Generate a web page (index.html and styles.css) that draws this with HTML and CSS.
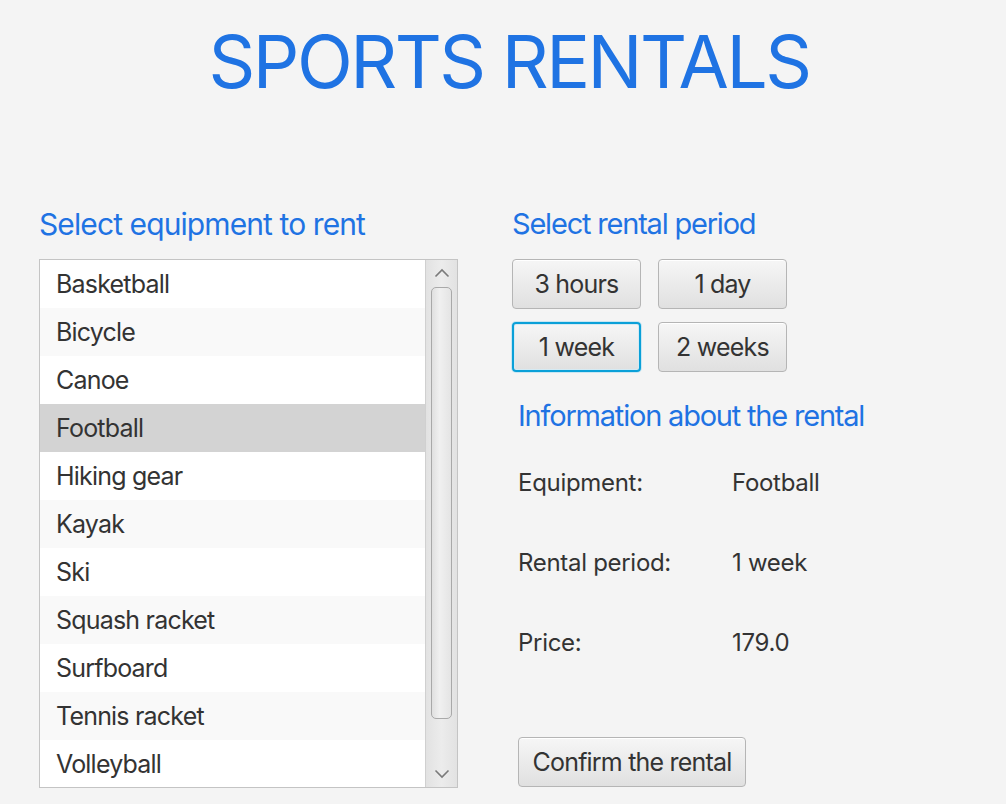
FILE: index.html
```html
<!DOCTYPE html>
<html>
<head>
<meta charset="utf-8">
<link rel="stylesheet" href="styles.css">
</head>
<body>
<div class="app">
  <h1 class="title">SPORTS RENTALS</h1>
  <div class="main">
    <div class="left">
      <h2 class="heading heading-lg">Select equipment to rent</h2>
      <div class="listview">
        <ul class="items">
          <li class="row">Basketball</li>
          <li class="row">Bicycle</li>
          <li class="row">Canoe</li>
          <li class="row selected">Football</li>
          <li class="row">Hiking gear</li>
          <li class="row">Kayak</li>
          <li class="row">Ski</li>
          <li class="row">Squash racket</li>
          <li class="row">Surfboard</li>
          <li class="row">Tennis racket</li>
          <li class="row">Volleyball</li>
        </ul>
        <div class="scrollbar">
          <div class="arrow up"><svg width="16" height="10" viewBox="0 0 16 10"><path d="M1.5 8.5 L8 2 L14.5 8.5" fill="none" stroke="#7a7a7a" stroke-width="1.6"/></svg></div>
          <div class="thumb"></div>
          <div class="arrow down"><svg width="16" height="10" viewBox="0 0 16 10"><path d="M1.5 1.5 L8 8 L14.5 1.5" fill="none" stroke="#7a7a7a" stroke-width="1.6"/></svg></div>
        </div>
      </div>
    </div>
    <div class="right">
      <h2 class="heading">Select rental period</h2>
      <div class="periods">
        <button class="btn period">3 hours</button>
        <button class="btn period">1 day</button>
        <button class="btn period focused">1 week</button>
        <button class="btn period">2 weeks</button>
      </div>
      <div class="info">
        <h2 class="heading info-heading">Information about the rental</h2>
        <div class="info-grid">
          <span class="label">Equipment:</span><span class="value">Football</span>
          <span class="label">Rental period:</span><span class="value">1 week</span>
          <span class="label">Price:</span><span class="value">179.0</span>
        </div>
        <button class="btn confirm">Confirm the rental</button>
      </div>
    </div>
  </div>
</div>
</body>
</html>
```
FILE: styles.css
```css
html, body {
  margin: 0;
  padding: 0;
  background: #f4f4f4;
}
body {
  font-family: Inter, "Noto Sans", sans-serif;
  color: #333333;
  width: 1006px;
  height: 804px;
  overflow: hidden;
}
.app {
  display: flex;
  flex-direction: column;
}
.title {
  margin: 0;
  padding: 18px 0 0 12px;
  text-align: center;
  font-weight: 400;
  font-size: 73px;
  line-height: 88px;
  color: #1f73e3;
  letter-spacing: -2.5px;
}
.main {
  display: flex;
  padding: 100px 0 0 39px;
  gap: 54px;
}
.heading {
  margin: 0;
  font-weight: 400;
  font-size: 29px;
  line-height: 36px;
  color: #1f73e3;
  letter-spacing: -1.2px;
}
.heading-lg {
  font-size: 30px;
  letter-spacing: -0.9px;
}
.left {
  width: 419px;
  display: flex;
  flex-direction: column;
  gap: 17px;
}
.listview {
  display: flex;
  height: 527px;
  border: 1px solid #c4c4c4;
  background: #ffffff;
}
.items {
  flex: 1;
  margin: 0;
  padding: 0;
  list-style: none;
  overflow: hidden;
}
.row {
  height: 48px;
  line-height: 48px;
  padding-left: 16px;
  font-size: 25px;
  letter-spacing: -0.8px;
  background: #ffffff;
}
.row:nth-child(even) {
  background: #f9f9f9;
}
.row.selected {
  background: #d3d3d3;
}
.scrollbar {
  width: 31px;
  border-left: 1px solid #d0d0d0;
  background: linear-gradient(to right, #e2e2e2, #ececec 50%, #e2e2e2);
  display: flex;
  flex-direction: column;
  align-items: center;
}
.arrow {
  height: 26px;
  display: flex;
  align-items: center;
  justify-content: center;
}
.thumb {
  width: 21px;
  height: 432px;
  margin-top: 1px;
  border: 1px solid #a9a9a9;
  border-radius: 5px;
  background: linear-gradient(to right, #e0e0e0, #f0f0f0 40%, #e4e4e4);
  box-sizing: border-box;
}
.arrow.down {
  margin-top: auto;
}
.right {
  display: flex;
  flex-direction: column;
  width: 420px;
}
.periods {
  display: grid;
  grid-template-columns: 129px 129px;
  column-gap: 17px;
  row-gap: 13px;
  margin-top: 17px;
}
.btn {
  font-family: Inter, "Noto Sans", sans-serif;
  font-size: 25px;
  letter-spacing: -0.8px;
  color: #333333;
  height: 50px;
  border: 1px solid #b5b5b5;
  border-radius: 4px;
  background: linear-gradient(to bottom, #f6f6f6, #e0e0e0);
  box-shadow: inset 0 1px 0 #ffffff;
  padding: 0;
}
.btn.focused {
  border: 2px solid #0aa0d8;
  box-shadow: 0 0 0 1px #c9e6f2, inset 0 0 0 1px #d5eaf3;
}
.info {
  padding-left: 6px;
  display: flex;
  flex-direction: column;
  margin-top: 26px;
}
.info-grid {
  display: grid;
  grid-template-columns: 214px auto;
  grid-auto-rows: 80px;
  margin-top: 34px;
  font-size: 24px;
  letter-spacing: -0.3px;
}
.confirm {
  width: 228px;
  margin-top: 29px;
}
```
